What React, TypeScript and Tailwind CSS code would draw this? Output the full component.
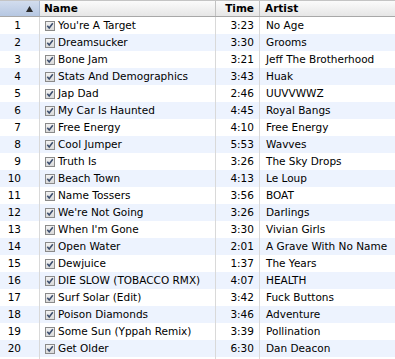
import React from "react";

const rows: [string, string, string][] = [
  ["You're A Target", "3:23", "No Age"],
  ["Dreamsucker", "3:30", "Grooms"],
  ["Bone Jam", "3:21", "Jeff The Brotherhood"],
  ["Stats And Demographics", "3:43", "Huak"],
  ["Jap Dad", "2:46", "UUVVWWZ"],
  ["My Car Is Haunted", "4:45", "Royal Bangs"],
  ["Free Energy", "4:10", "Free Energy"],
  ["Cool Jumper", "5:53", "Wavves"],
  ["Truth Is", "3:26", "The Sky Drops"],
  ["Beach Town", "4:13", "Le Loup"],
  ["Name Tossers", "3:56", "BOAT"],
  ["We're Not Going", "3:26", "Darlings"],
  ["When I'm Gone", "3:30", "Vivian Girls"],
  ["Open Water", "2:01", "A Grave With No Name"],
  ["Dewjuice", "1:37", "The Years"],
  ["DIE SLOW (TOBACCO RMX)", "4:07", "HEALTH"],
  ["Surf Solar (Edit)", "3:42", "Fuck Buttons"],
  ["Poison Diamonds", "3:46", "Adventure"],
  ["Some Sun (Yppah Remix)", "3:39", "Pollination"],
  ["Get Older", "6:30", "Dan Deacon"],
];

function Check() {
  return (
    <svg width="10" height="10" viewBox="0 0 10 10" className="shrink-0">
      <defs>
        <linearGradient id="cb" x1="0" y1="0" x2="0" y2="1">
          <stop offset="0" stopColor="#f4f4f4" />
          <stop offset="1" stopColor="#d8d8d8" />
        </linearGradient>
      </defs>
      <rect x="0.5" y="0.5" width="9" height="9" fill="url(#cb)" stroke="#8a8a8a" />
      <path d="M2.3 4.8 L4.2 7 L7.8 2.2" fill="none" stroke="#3d4f6e" strokeWidth="1.6" />
    </svg>
  );
}

export default function App() {
  return (
    <div
      className="w-[395px] h-[359px] overflow-hidden bg-white text-[10.5px] text-black"
      style={{ fontFamily: '"DejaVu Sans", "Liberation Sans", sans-serif' }}
    >
      <div className="flex h-[17px] border-t border-b border-t-[#c4c4c4] border-b-[#a8a8a8] bg-gradient-to-b from-[#fbfbfb] to-[#e6e6e6] font-bold leading-[15px]">
        <div className="w-[40px] shrink-0 flex items-center justify-end pr-[6px] border-r border-[#a9b8cf] bg-gradient-to-b from-[#d2ddee] to-[#b6c7e2]">
          <svg width="7" height="6" viewBox="0 0 7 6">
            <path d="M3.5 0 L7 6 L0 6 Z" fill="#2a2a2a" />
          </svg>
        </div>
        <div className="w-[176px] shrink-0 pl-[4px] border-r border-[#c2c2c2]">Name</div>
        <div className="w-[44px] shrink-0 text-right pr-[5px] border-r border-[#c2c2c2]">Time</div>
        <div className="flex-1 pl-[5px]">Artist</div>
      </div>
      {[...rows, ["", "", ""] as [string, string, string]].map((r, i) => (
        <div
          key={i}
          className={`flex h-[17px] leading-[17px] ${i % 2 === 1 ? "bg-[#edf3fe]" : "bg-white"}`}
        >
          <div className="w-[40px] shrink-0 text-right pr-[18px] border-r border-[#d9d9d9]">
            {r[0] ? i + 1 : ""}
          </div>
          <div className="w-[176px] shrink-0 pl-[5px] flex items-center gap-[3px] border-r border-[#d9d9d9] whitespace-nowrap overflow-hidden">
            {r[0] && <Check />}
            <span>{r[0]}</span>
          </div>
          <div className="w-[44px] shrink-0 text-right pr-[5px] border-r border-[#d9d9d9]">{r[1]}</div>
          <div className="flex-1 pl-[6px] whitespace-nowrap">{r[2]}</div>
        </div>
      ))}
    </div>
  );
}
